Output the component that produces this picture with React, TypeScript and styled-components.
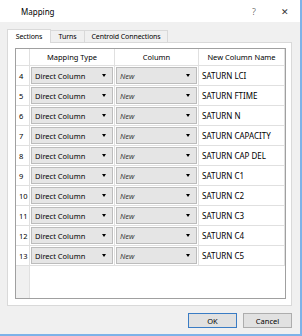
import { Fragment } from "react";
import styled, { createGlobalStyle } from "styled-components";

const GlobalStyle = createGlobalStyle`
  html, body {
    margin: 0;
    padding: 0;
    background: #ffffff;
  }
  body {
    font-family: "Noto Sans", "Open Sans", sans-serif;
    font-size: 7.5px;
    color: #000000;
  }
`;

const rows = [
  { id: 4, name: "SATURN LCI" },
  { id: 5, name: "SATURN FTIME" },
  { id: 6, name: "SATURN N" },
  { id: 7, name: "SATURN CAPACITY" },
  { id: 8, name: "SATURN CAP DEL" },
  { id: 9, name: "SATURN C1" },
  { id: 10, name: "SATURN C2" },
  { id: 11, name: "SATURN C3" },
  { id: 12, name: "SATURN C4" },
  { id: 13, name: "SATURN C5" }
];

const tabs = [
  { label: "Sections", width: 44, active: true },
  { label: "Turns", width: 35 },
  { label: "Centroid Connections", width: 84 }
];

const Window = styled.div`
  width: 302px;
  height: 336px;
  box-sizing: border-box;
  display: flex;
  flex-direction: column;
  border-right: 2px solid #7db2e8;
  border-bottom: 2px solid #7db2e8;
  background: #f0f0f0;
`;

const TitleBar = styled.div`
  height: 22px;
  flex: none;
  background: #ffffff;
  display: flex;
  align-items: center;
  padding: 0 0 0 21px;
`;

const Title = styled.span`
  flex: 1;
  font-size: 8px;
`;

const TitleButton = styled.span<{ $w: number }>`
  width: ${({ $w }) => $w}px;
  text-align: center;
  font-size: 9px;
  font-weight: 300;
  color: #333333;
`;

const Body = styled.div`
  flex: 1;
  display: flex;
  flex-direction: column;
  padding: 6px 8px 0 7px;
`;

const TabStrip = styled.div`
  display: flex;
  align-items: flex-end;
  height: 14px;
`;

const Tab = styled.div<{ $active?: boolean; $width: number }>`
  width: ${({ $width }) => $width}px;
  height: ${({ $active }) => ($active ? "14px" : "12px")};
  box-sizing: border-box;
  border: 1px solid #d9d9d9;
  border-bottom: none;
  margin-left: ${({ $active }) => ($active ? "0" : "-1px")};
  margin-bottom: ${({ $active }) => ($active ? "-1px" : "0")};
  background: ${({ $active }) => ($active ? "#ffffff" : "#f0f0f0")};
  position: relative;
  z-index: ${({ $active }) => ($active ? 1 : 0)};
  display: flex;
  align-items: center;
  justify-content: center;
  font-size: 7px;
  letter-spacing: -0.1px;
  white-space: nowrap;
`;

const Panel = styled.div`
  height: 264px;
  box-sizing: border-box;
  background: #ffffff;
  border: 1px solid #d9d9d9;
  padding: 5px 5px 6px 7px;
  display: flex;
`;

const Grid = styled.div`
  flex: 1;
  border: 1px solid #a0a0a0;
  display: grid;
  grid-template-columns: 14px 85px 84px 1fr;
  grid-template-rows: 17px repeat(10, 20px) 1fr;
  background: #ffffff;
`;

const HeaderCell = styled.div`
  border-right: 1px solid #e0e0e0;
  border-bottom: 1px solid #e0e0e0;
  display: flex;
  align-items: center;
  justify-content: center;
  white-space: nowrap;
`;

const RowHeader = styled.div`
  border-right: 1px solid #e0e0e0;
  border-bottom: 1px solid #e0e0e0;
  display: flex;
  align-items: center;
  padding-left: 3px;
`;

const Cell = styled.div`
  border-right: 1px solid #e0e0e0;
  border-bottom: 1px solid #e0e0e0;
  display: flex;
  align-items: center;
  padding: 0 1px;
  min-width: 0;
`;

const NameCell = styled(Cell)`
  padding-left: 3px;
  font-size: 8px;
  white-space: nowrap;
`;

const Combo = styled.div<{ $placeholder?: boolean }>`
  flex: 1;
  height: 17px;
  box-sizing: border-box;
  border: 1px solid #bcbcbc;
  background: #e5e5e5;
  display: flex;
  align-items: center;
  padding: 0 6px 0 3px;
  font-style: ${({ $placeholder }) => ($placeholder ? "italic" : "normal")};
  color: ${({ $placeholder }) => ($placeholder ? "#3a3a3a" : "#000000")};
`;

const ComboText = styled.span`
  flex: 1;
  white-space: nowrap;
`;

const Arrow = styled.span`
  width: 0;
  height: 0;
  border-left: 2.5px solid transparent;
  border-right: 2.5px solid transparent;
  border-top: 3px solid #000000;
`;

const FillerHeader = styled.div`
  background: #f0f0f0;
  border-right: 1px solid #e0e0e0;
`;

const Filler = styled.div`
  grid-column: span 3;
`;

const Footer = styled.div`
  flex: 1;
  display: flex;
  justify-content: flex-end;
  align-items: flex-start;
  gap: 6px;
  padding-top: 7px;
`;

const Button = styled.button<{ $default?: boolean }>`
  width: 49px;
  height: 15px;
  padding: 0;
  font-family: inherit;
  font-size: 7.5px;
  color: #000000;
  background: #e1e1e1;
  border: 1px solid ${({ $default }) => ($default ? "#3a7cc4" : "#adadad")};
  box-shadow: ${({ $default }) => ($default ? "inset 0 0 0 1px #e1e1e1" : "none")};
`;

const ComboBox = ({ value, placeholder }: { value: string; placeholder?: boolean }) => (
  <Combo $placeholder={placeholder}>
    <ComboText>{value}</ComboText>
    <Arrow />
  </Combo>
);

export default function App() {
  return (
    <>
      <GlobalStyle />
      <Window>
        <TitleBar>
          <Title>Mapping</Title>
          <TitleButton $w={32}>?</TitleButton>
          <TitleButton $w={30}>✕</TitleButton>
        </TitleBar>
        <Body>
          <TabStrip>
            {tabs.map((tab) => (
              <Tab key={tab.label} $active={tab.active} $width={tab.width}>
                {tab.label}
              </Tab>
            ))}
          </TabStrip>
          <Panel>
            <Grid>
              <HeaderCell />
              <HeaderCell>Mapping Type</HeaderCell>
              <HeaderCell>Column</HeaderCell>
              <HeaderCell>New Column Name</HeaderCell>
              {rows.map((row) => (
                <Fragment key={row.id}>
                  <RowHeader>{row.id}</RowHeader>
                  <Cell>
                    <ComboBox value="Direct Column" />
                  </Cell>
                  <Cell>
                    <ComboBox value="New" placeholder />
                  </Cell>
                  <NameCell>{row.name}</NameCell>
                </Fragment>
              ))}
              <FillerHeader />
              <Filler />
            </Grid>
          </Panel>
          <Footer>
            <Button $default>OK</Button>
            <Button>Cancel</Button>
          </Footer>
        </Body>
      </Window>
    </>
  );
}
